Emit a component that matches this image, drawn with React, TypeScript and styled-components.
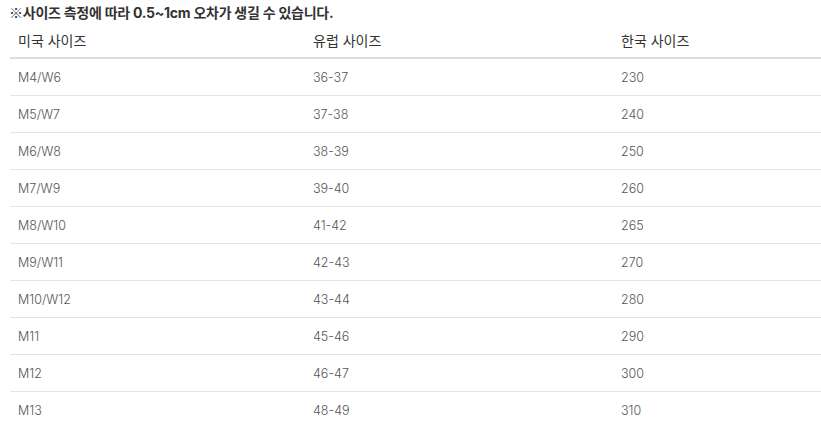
import styled, { createGlobalStyle } from "styled-components";

const GlobalStyle = createGlobalStyle`
    body {
        margin: 0;
        background: #fff;
        font-family: Inter, "Noto Sans CJK KR", sans-serif;
    }
`;

const Page = styled.div`
    padding: 3px 0 0 10px;
`;

const Notice = styled.p`
    margin: 0 0 0 -1px;
    height: 19px;
    font-size: 14px;
    font-weight: bold;
    color: #333;
    line-height: 19px;
    letter-spacing: -0.25px;
`;

const Mark = styled.span`
    font-family: "Noto Sans CJK KR", sans-serif;
`;

const Table = styled.div`
    display: grid;
    grid-template-columns: 295px 308px 1fr;
`;

const HeadCell = styled.div`
    height: 35px;
    display: flex;
    align-items: center;
    padding-left: 8px;
    font-size: 14px;
    color: #333;
    border-bottom: 2px solid #ddd;
`;

const Cell = styled.div<{ $last?: boolean }>`
    height: 36px;
    display: flex;
    align-items: center;
    padding-left: 8px;
    font-size: 12.5px;
    font-weight: 300;
    color: #555;
    border-bottom: 1px solid ${(p) => (p.$last ? "transparent" : "#e3e3e3")};
`;

const rows = [
    ["M4/W6", "36-37", "230"],
    ["M5/W7", "37-38", "240"],
    ["M6/W8", "38-39", "250"],
    ["M7/W9", "39-40", "260"],
    ["M8/W10", "41-42", "265"],
    ["M9/W11", "42-43", "270"],
    ["M10/W12", "43-44", "280"],
    ["M11", "45-46", "290"],
    ["M12", "46-47", "300"],
    ["M13", "48-49", "310"],
];

export default function App() {
    return (
        <Page>
            <GlobalStyle />
            <Notice>
                <Mark>※</Mark>사이즈 측정에 따라 0.5~1cm 오차가 생길 수 있습니다.
            </Notice>
            <Table>
                <HeadCell>미국 사이즈</HeadCell>
                <HeadCell>유럽 사이즈</HeadCell>
                <HeadCell>한국 사이즈</HeadCell>
                {rows.map((r, i) =>
                    r.map((v, j) => (
                        <Cell key={`${i}-${j}`} $last={i === rows.length - 1}>
                            {v}
                        </Cell>
                    ))
                )}
            </Table>
        </Page>
    );
}
